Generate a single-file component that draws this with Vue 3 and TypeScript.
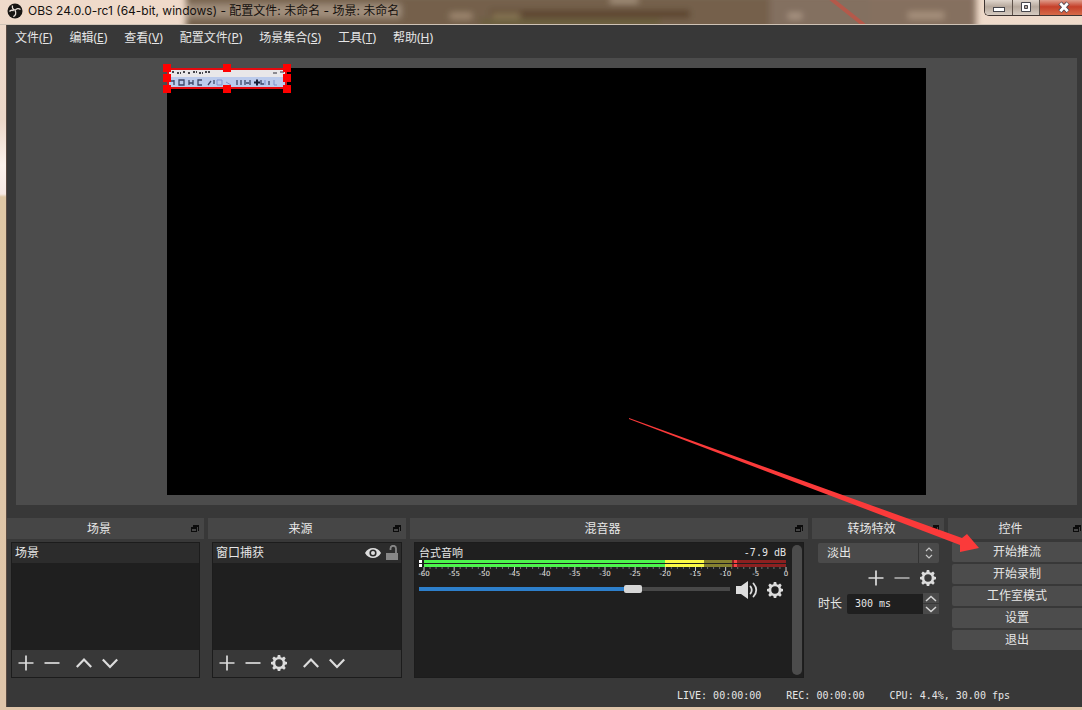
<script setup lang="ts">
import { ref } from 'vue'

interface MenuEntry { label: string; key: string }

const menus: MenuEntry[] = [
  { label: '文件', key: 'F' },
  { label: '编辑', key: 'E' },
  { label: '查看', key: 'V' },
  { label: '配置文件', key: 'P' },
  { label: '场景集合', key: 'S' },
  { label: '工具', key: 'T' },
  { label: '帮助', key: 'H' },
]
const actions: string[] = ['开始推流', '开始录制', '工作室模式', '设置', '退出']
const scaleLabels: number[] = Array.from({ length: 13 }, (_, i) => -60 + i * 5)
const ticks: number[] = Array.from({ length: 61 }, (_, i) => i)
const volume = ref<number>(70)
const duration = ref<string>('300 ms')
const transition = ref<string>('淡出')

const gear =
  'M6.8 0h2.4l.5 2.2 1.4.6 2-1.3 1.6 1.7-1.2 2 .6 1.4 2.1.4v2.2l-2.1.5-.6 1.4 1.2 2-1.6 1.6-2-1.2-1.4.6L9.2 16H6.8l-.5-1.9-1.4-.6-2 1.2-1.6-1.6 1.2-2-.6-1.4L0 9.2V7l1.9-.4.6-1.4-1.2-2 1.6-1.7 2 1.3 1.4-.6zM8 4.3a3.7 3.7 0 1 0 0 7.4a3.7 3.7 0 1 0 0-7.4z'
const plus = 'M8 .5v15M.5 8h15'
const minus = 'M.5 8h15'
const up = 'M.8 12L8 4.5 15.2 12'
const down = 'M.8 4.5L8 12l7.2-7.5'
</script>

<template>
  <div class="desktop">
    <header class="titlebar">
      <svg class="scenery" viewBox="0 0 1082 24" preserveAspectRatio="none" aria-hidden="true">
        <defs>
          <filter id="soft" x="-20%" y="-50%" width="140%" height="200%"><feGaussianBlur stdDeviation="3" /></filter>
        </defs>
        <g filter="url(#soft)">
          <rect x="186" y="-6" width="692" height="40" fill="#75604b" />
          <rect x="186" y="4" width="215" height="14" fill="#a08e7c" />
          <rect x="490" y="10" width="200" height="8" fill="#5b452d" />
          <rect x="480" y="20" width="180" height="5" fill="#686039" />
          <rect x="770" y="-4" width="104" height="32" fill="#837061" />
          <rect x="450" y="13" width="22" height="6" fill="#a18a72" />
          <rect x="492" y="13" width="28" height="6" fill="#877455" />
          <rect x="610" y="-2" width="28" height="5" fill="#a99580" />
          <rect x="788" y="13" width="14" height="6" fill="#ab9784" />
          <rect x="870" y="-6" width="106" height="40" fill="#85705f" />
          <rect x="908" y="12" width="36" height="7" fill="#a8937e" />
        </g>
        <path d="M830-2l34 27" stroke="#bd5547" stroke-width="4" opacity=".85" />
      </svg>
      <svg class="logo" viewBox="0 0 16 16" aria-hidden="true">
        <circle cx="8" cy="8" r="7.5" fill="#171513" />
        <path d="M5.500 2.500c-.6 2.500.6 4.300 2.700 4.700M13.500 6.500c-1.800-1.400-4.400-1-5.300.8M6.300 13.600c2.300-.6 3.200-3.500 1.900-6M2.500 8.500c1.100-1.400 2.800-1.500 4.200-.7" fill="none" stroke="#e8dfd8" stroke-width="1.3" />
      </svg>
      <h1>OBS 24.0.0-rc1 (64-bit, windows) - 配置文件: 未命名 - 场景: 未命名</h1>
      <div class="window-buttons">
        <button type="button" aria-label="最小化">
          <svg width="14" height="14" viewBox="0 0 14 14"><rect x="1.500" y="6.500" width="11" height="4" fill="#fff" stroke="#45454b" /></svg>
        </button>
        <button type="button" aria-label="最大化">
          <svg width="12" height="14" viewBox="0 0 12 14"><path d="M1.500 1.500h9v9h-9zM4.500 4.500h3v3h-3z" fill="#fff" stroke="#45454b" fill-rule="evenodd" /></svg>
        </button>
        <button type="button" class="close" aria-label="关闭">
          <svg width="14" height="14" viewBox="0 0 14 14"><path d="M3 2l8 8.500M11 2l-8 8.500" stroke="#4b4550" stroke-width="4.600" /><path d="M3.300 2.300l7.400 7.900M10.700 2.300l-7.400 7.900" stroke="#fff" stroke-width="2.800" /></svg>
        </button>
      </div>
    </header>

    <main class="window">
      <nav class="menubar">
        <button v-for="m in menus" :key="m.key" type="button">{{ m.label }}(<u>{{ m.key }}</u>)</button>
      </nav>

      <section class="preview">
        <div class="canvas">
          <svg class="source" width="130" height="31" viewBox="0 0 130 31" aria-hidden="true">
            <rect x="5" y="5" width="120" height="21" fill="#e9e7e9" />
            <rect x="5" y="14" width="120" height="12" fill="#bccbec" />
            <path d="M10 9h3M15 10h4M21 9h3M26 10h3M31 9h4M37 10h4M43 9h5" stroke="#45454b" stroke-width="2" stroke-dasharray="2 1" />
            <path d="M111 10h4M118 9h4" stroke="#30303a" />
            <path d="M12 17v5M12 18h-3M17 17h5v5h-5zM27 17v5M27 20h4M31 17v5M40 17h-4v5h4M46 22l3-4M52 17v4M75 17v5M79 17v5M83 17v5M88 17v5M84 20h3M107 18v4M99 17v4h3" fill="none" stroke="#3b4668" stroke-width="1.300" />
            <path d="M92 19.500h6M95 16.500v6" stroke="#151d35" stroke-width="2" />
            <path d="M55 17h5v5h-5zM64 19l5 3M103 17v5M112 17v5h3" fill="none" stroke="#7f91cd" />
            <rect x="6" y="6" width="118" height="19" fill="none" stroke="#e60a0f" stroke-width="2" />
            <path d="M1 1h8v8H1zM61 1h8v8h-8zM121 1h8v8h-8zM1 11h8v8H1zM121 11h8v8h-8zM1 22h8v8H1zM61 22h8v8h-8zM121 22h8v8h-8z" fill="#f00" />
          </svg>
        </div>
      </section>

      <div class="docks">
        <section class="dock">
          <header><h2>场景</h2><span class="float" /></header>
          <div class="panel list">
            <div class="row"><span>场景</span></div>
            <div class="empty" />
            <div class="tools">
              <button type="button" aria-label="添加场景"><svg class="line" viewBox="0 0 16 16"><path :d="plus" /></svg></button>
              <button type="button" aria-label="移除场景"><svg class="line" viewBox="0 0 16 16"><path :d="minus" /></svg></button>
              <button type="button" class="apart" aria-label="上移"><svg class="line bold" viewBox="0 0 16 16"><path :d="up" /></svg></button>
              <button type="button" aria-label="下移"><svg class="line bold" viewBox="0 0 16 16"><path :d="down" /></svg></button>
            </div>
          </div>
        </section>

        <section class="dock">
          <header><h2>来源</h2><span class="float" /></header>
          <div class="panel list">
            <div class="row">
              <span>窗口捕获</span>
              <button type="button" aria-label="可见">
                <svg width="16" height="16" viewBox="0 0 16 16"><path d="M0 8C3.500 1.200 12.500 1.200 16 8C12.500 14.800 3.500 14.800 0 8z" fill="#dedede" /><circle cx="8" cy="8" r="3.600" fill="#2b2b2b" /><circle cx="8" cy="8" r="2" fill="#dedede" /></svg>
              </button>
              <button type="button" aria-label="锁定">
                <svg width="14" height="16" viewBox="0 0 14 16"><path d="M1 8h12v7H1z" fill="#868686" /><path d="M5.500 5V3.500a2.700 2.700 0 0 1 5.500 0V8" fill="none" stroke="#868686" stroke-width="1.800" /></svg>
              </button>
            </div>
            <div class="empty" />
            <div class="tools">
              <button type="button" aria-label="添加来源"><svg class="line" viewBox="0 0 16 16"><path :d="plus" /></svg></button>
              <button type="button" aria-label="移除来源"><svg class="line" viewBox="0 0 16 16"><path :d="minus" /></svg></button>
              <button type="button" aria-label="来源属性"><svg class="gear" viewBox="0 0 16 16"><path :d="gear" /></svg></button>
              <button type="button" class="apart" aria-label="上移"><svg class="line bold" viewBox="0 0 16 16"><path :d="up" /></svg></button>
              <button type="button" aria-label="下移"><svg class="line bold" viewBox="0 0 16 16"><path :d="down" /></svg></button>
            </div>
          </div>
        </section>

        <section class="dock">
          <header><h2>混音器</h2><span class="float" /></header>
          <div class="panel mixer">
            <div class="channel">
              <div class="names"><label for="volume">台式音响</label><output class="mono">-7.9 dB</output></div>
              <div class="meter">
                <div class="clip"><i /><i /></div>
                <div class="levels">
                  <div class="bar" />
                  <div class="bar" />
                  <svg class="ticks" width="100%" height="4" aria-hidden="true">
                    <line v-for="t in ticks" :key="t" :x1="`${t / 0.6}%`" :x2="`${t / 0.6}%`" y1="0" :y2="t % 5 ? 2 : 4" :class="{ major: t % 5 === 0 }" />
                  </svg>
                  <div class="scale"><span v-for="n in scaleLabels" :key="n">{{ n }}</span></div>
                </div>
              </div>
              <div class="volume">
                <input id="volume" v-model.number="volume" type="range" min="0" max="100">
                <button type="button" aria-label="静音">
                  <svg width="24" height="20" viewBox="0 0 24 20"><path d="M1 6h5l7-5v18l-7-5H1z" fill="#dcdcdc" /><path d="M15.500 6.500q2.500 3.500 0 7M18.500 3.500q5.500 6.500 0 13" fill="none" stroke="#dcdcdc" stroke-width="1.800" stroke-linecap="round" /></svg>
                </button>
                <button type="button" aria-label="音频设置"><svg class="gear" viewBox="0 0 16 16"><path :d="gear" /></svg></button>
              </div>
            </div>
            <div class="scrollbar" />
          </div>
        </section>

        <section class="dock">
          <header><h2>转场特效</h2><span class="float" /></header>
          <div class="transitions">
            <div class="picker">
              <select v-model="transition" aria-label="转场特效"><option>淡出</option></select>
              <svg width="8" height="12" viewBox="0 0 8 12" aria-hidden="true"><path d="M1 4l3-3 3 3M1 8l3 3 3-3" fill="none" stroke="#c8c8c8" stroke-width="1.200" /></svg>
            </div>
            <div class="adjust">
              <button type="button" aria-label="添加转场"><svg class="line" viewBox="0 0 16 16"><path :d="plus" /></svg></button>
              <button type="button" aria-label="移除转场"><svg class="line dim" viewBox="0 0 16 16"><path :d="minus" /></svg></button>
              <button type="button" aria-label="转场属性"><svg class="gear" viewBox="0 0 16 16"><path :d="gear" /></svg></button>
            </div>
            <div class="duration">
              <label for="duration">时长</label>
              <input id="duration" v-model="duration" class="mono" type="text">
              <div class="spin">
                <button type="button" aria-label="增加"><svg width="12" height="7" viewBox="0 0 12 7"><path d="M1 6l5-4.500L11 6" /></svg></button>
                <button type="button" aria-label="减少"><svg width="12" height="7" viewBox="0 0 12 7"><path d="M1 1l5 4.500L11 1" /></svg></button>
              </div>
            </div>
          </div>
        </section>

        <section class="dock edge">
          <header><h2>控件</h2><span class="float" /></header>
          <div class="controls">
            <button v-for="a in actions" :key="a" type="button">{{ a }}</button>
          </div>
        </section>
      </div>

      <footer class="status mono">
        <span>LIVE: 00:00:00</span><span>REC: 00:00:00</span><span>CPU: 4.4%, 30.00 fps</span>
      </footer>
    </main>

    <svg class="pointer" width="350" height="134" viewBox="0 0 350 134" aria-hidden="true">
      <path d="M0 0L333 120 338 116 350 130 331 134 331 127 0 1z" fill="#fb3a3a" />
    </svg>
  </div>
</template>

<style>
body {
  margin: 0;
}
</style>

<style scoped>
* {
  box-sizing: border-box;
}
.desktop {
  position: relative;
  display: flex;
  flex-direction: column;
  min-height: 100vh;
  overflow: hidden;
  background: linear-gradient(#efdaca 0, #ecd8c9 120px, #fbf2ec 165px, #f6e9e4 194px, #dfc7a5 197px, #dfc5aa 100%);
  color: #e6e6e6;
  font: 12px/16px "Noto Sans", "Noto Sans CJK SC", sans-serif;
}
button {
  display: flex;
  align-items: center;
  justify-content: center;
  padding: 0;
  border: 0;
  background: none;
  color: inherit;
  font: inherit;
}
h1,
h2 {
  margin: 0;
  font: inherit;
}
svg {
  display: block;
  flex: none;
}
.mono {
  font-family: "DejaVu Sans Mono", monospace;
  font-size: 10px;
}
.titlebar {
  position: relative;
  display: flex;
  height: 25px;
  padding-left: 7px;
  border-bottom: 1px solid #cfc3b6;
  color: #15110e;
}
.scenery {
  position: absolute;
  inset: 0;
  width: 100%;
  height: 24px;
}
.logo {
  position: relative;
  width: 16px;
  height: 16px;
  margin-top: 3px;
}
.titlebar h1 {
  position: relative;
  flex: 1;
  margin: 3px 0 0 5px;
  font-family: Inter, "Noto Sans CJK SC", sans-serif;
  white-space: nowrap;
}
.window-buttons {
  position: relative;
  display: flex;
  height: 16px;
  border: 1px solid #3f3532;
  border-width: 0 0 1px 1px;
  border-radius: 0 0 0 5px;
  overflow: hidden;
}
.window-buttons button {
  width: 22px;
  border-right: 1px solid #5e5149;
  background: linear-gradient(#e0d6cd, #b6a89c 45%, #d6cbc1);
}
.window-buttons button:first-child {
  width: 28px;
}
.window-buttons .close {
  width: 42px;
  padding-right: 11px;
  justify-content: flex-end;
  border: 0;
  background: linear-gradient(#df9c8b, #c5402a 45%, #d66b49);
}
.window-buttons button:nth-child(2) {
  width: 27px;
}
.window {
  display: flex;
  flex: 1;
  flex-direction: column;
  margin: 0 0 3px 6px;
  border-left: 1px solid #5a4b43;
  background: #383838;
}
.menubar {
  display: flex;
  gap: 17px;
  height: 33px;
  padding: 0 8px 7px;
}
.preview {
  display: flex;
  flex: 1;
  justify-content: center;
  min-height: 200px;
  margin: 0 5px 0 9px;
  padding: 10px;
  background: #4c4c4c;
}
.canvas {
  position: relative;
  width: 73%;
  background: #000;
}
.source {
  position: absolute;
  top: -5px;
  left: -5px;
}
.docks {
  display: grid;
  grid-template-columns: 197fr 198fr 398fr 132fr 134fr;
  gap: 4px;
  margin-top: 13px;
}
.dock {
  display: flex;
  flex-direction: column;
  min-width: 0;
}
.dock > header {
  display: flex;
  align-items: center;
  height: 21px;
  margin-bottom: 3px;
  padding-right: 5px;
  background: #464646;
}
.edge > header {
  padding-right: 1px;
}
.dock h2 {
  flex: 1;
  text-align: center;
}
.float {
  position: relative;
  width: 6px;
  height: 5px;
  margin: 2px 2px 0 0;
  border: 1px solid #0c0c0c;
  border-top-width: 2px;
}
.float::after {
  content: "";
  position: absolute;
  top: -4px;
  left: 1px;
  width: 5px;
  height: 4px;
  border: 1px solid #0c0c0c;
  border-width: 2px 1px 0 0;
}
.panel {
  flex: 1;
  min-height: 136px;
  margin: 0 4px;
  border: 1px solid #1c1c1c;
  background: #1f1f1f;
}
.list {
  display: flex;
  flex-direction: column;
}
.row {
  display: flex;
  align-items: center;
  gap: 4px;
  height: 20px;
  padding: 0 2px 0 3px;
  background: #2c2c2c;
}
.row span {
  flex: 1;
}
.empty {
  flex: 1;
}
.tools {
  display: flex;
  height: 27px;
  padding: 1px 0 2px 1px;
  background: #383838;
}
.tools button,
.adjust button {
  width: 26px;
  height: 24px;
}
.tools .apart {
  margin-left: 6px;
}
.line,
.gear {
  width: 16px;
  height: 16px;
}
.line {
  fill: none;
  stroke: #dcdcdc;
  stroke-width: 1.7;
}
.bold {
  stroke-width: 2.2;
}
.dim {
  stroke: #a8a8a8;
}
.gear {
  fill: #dcdcdc;
  fill-rule: evenodd;
}
.mixer {
  display: flex;
  gap: 6px;
  margin-right: 4px;
  padding: 2px 1px 2px 4px;
}
.channel {
  flex: 1;
  min-width: 0;
}
.names {
  display: flex;
  align-items: center;
  justify-content: space-between;
  height: 15px;
  font-size: 11px;
}
.meter {
  display: flex;
  gap: 2px;
}
.clip {
  display: grid;
  gap: 1px;
  width: 3px;
  height: 7px;
}
.clip i {
  background: #fff;
}
.levels {
  flex: 1;
}
.bar {
  height: 3px;
  margin-bottom: 1px;
  background: linear-gradient(90deg, #4cf54c 0 66.6%, #fbfa45 66.6% 77.4%, #85802f 77.4% 85%, #8b2020 85% 85.6%, #f64444 85.6% 86.6%, #8b2020 86.6%);
}
.bar + .bar {
  margin-bottom: 0;
}
.ticks {
  overflow: visible;
}
.ticks line {
  stroke: #707070;
}
.ticks .major {
  stroke: #c9c9c9;
}
.scale {
  display: flex;
  justify-content: space-between;
  height: 8px;
  font: 7px/6px "DejaVu Sans", sans-serif;
}
.scale span {
  display: flex;
  justify-content: center;
  width: 0;
}
.volume {
  display: flex;
  align-items: center;
  height: 22px;
}
.volume input {
  flex: 1;
  min-width: 0;
  height: 8px;
  margin: 0 5px 2px 0;
  appearance: none;
  background: linear-gradient(90deg, #2d7fcb 0 69%, #484848 69%) center / 100% 4px no-repeat;
}
.volume input::-webkit-slider-thumb {
  width: 18px;
  height: 8px;
  appearance: none;
  border-radius: 2px;
  background: #d6d6d6;
}
.volume button + button {
  margin: 0 3px 0 8px;
}
.scrollbar {
  width: 10px;
  border-radius: 5px;
  background: #4c4c4c;
}
.transitions {
  padding: 1px 5px 0 6px;
}
.picker {
  display: grid;
  align-items: center;
  border-radius: 2px;
}
.picker > * {
  grid-area: 1 / 1;
}
.picker svg {
  justify-self: end;
  margin-right: 6px;
  pointer-events: none;
}
.picker select {
  width: 100%;
  height: 20px;
  padding: 0 0 0 9px;
  appearance: none;
  border: 0;
  border-radius: 2px;
  background: linear-gradient(#333, #333) right 20px top / 1px 100% no-repeat #4a4a4a;
  color: inherit;
  font: inherit;
}
.adjust {
  display: flex;
  justify-content: flex-end;
  margin: 3px -2px 3px 0;
}
.duration {
  display: flex;
  align-items: center;
  height: 21px;
}
.duration label {
  margin-right: 5px;
}
.duration input {
  flex: 1;
  min-width: 0;
  height: 20px;
  padding: 0 8px;
  border: 0;
  border-radius: 2px 0 0 2px;
  background: #1f1f1f;
  color: inherit;
}
.spin {
  display: grid;
  gap: 1px;
  width: 16px;
}
.spin button {
  height: 10px;
  background: #4a4a4a;
}
.spin path {
  fill: none;
  stroke: #d6d6d6;
  stroke-width: 1.5;
}
.controls {
  display: grid;
  gap: 2px;
  padding-left: 4px;
}
.controls button {
  height: 20px;
  border-radius: 2px 0 0 2px;
  background: #4c4c4c;
}
.status {
  display: flex;
  justify-content: flex-end;
  gap: 25px;
  height: 29px;
  padding: 10px 72px 0 0;
  line-height: 16px;
}
.pointer {
  position: absolute;
  right: 103px;
  bottom: 158px;
  pointer-events: none;
}
</style>
